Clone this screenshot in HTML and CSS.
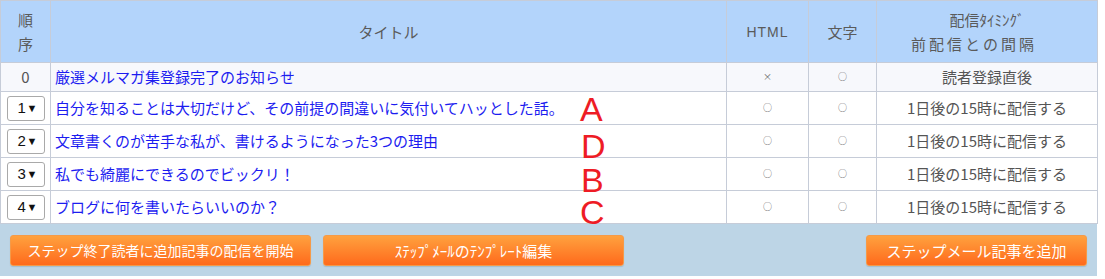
FILE: index.html
```html
<!DOCTYPE html>
<html lang="ja">
<head>
<meta charset="utf-8">
<link rel="stylesheet" href="styles.css">
</head>
<body>
<div class="wrap">
  <table class="steps">
    <colgroup>
      <col class="c-order"><col class="c-title"><col class="c-html"><col class="c-text"><col class="c-timing">
    </colgroup>
    <thead>
      <tr>
        <th>順<br>序</th>
        <th>タイトル</th>
        <th class="latin">HTML</th>
        <th>文字</th>
        <th><span class="l1">配信ﾀｲﾐﾝｸﾞ</span><br><span class="l2">前配信との間隔</span></th>
      </tr>
    </thead>
    <tbody>
      <tr class="first">
        <td class="num">0</td>
        <td class="title"><a href="#">厳選メルマガ集登録完了のお知らせ</a></td>
        <td class="mark">×</td>
        <td class="mark">○</td>
        <td class="timing">読者登録直後</td>
      </tr>
      <tr>
        <td class="num"><span class="sel">1<i>▼</i></span></td>
        <td class="title"><a href="#">自分を知ることは大切だけど、その前提の間違いに気付いてハッとした話。</a></td>
        <td class="mark">○</td>
        <td class="mark">○</td>
        <td class="timing">1日後の15時に配信する</td>
      </tr>
      <tr>
        <td class="num"><span class="sel">2<i>▼</i></span></td>
        <td class="title"><a href="#">文章書くのが苦手な私が、書けるようになった3つの理由</a></td>
        <td class="mark">○</td>
        <td class="mark">○</td>
        <td class="timing">1日後の15時に配信する</td>
      </tr>
      <tr>
        <td class="num"><span class="sel">3<i>▼</i></span></td>
        <td class="title"><a href="#">私でも綺麗にできるのでビックリ！</a></td>
        <td class="mark">○</td>
        <td class="mark">○</td>
        <td class="timing">1日後の15時に配信する</td>
      </tr>
      <tr>
        <td class="num"><span class="sel">4<i>▼</i></span></td>
        <td class="title"><a href="#">ブログに何を書いたらいいのか？</a></td>
        <td class="mark">○</td>
        <td class="mark">○</td>
        <td class="timing">1日後の15時に配信する</td>
      </tr>
    </tbody>
  </table>
  <div class="footer">
    <a class="btn b1" href="#">ステップ終了読者に追加記事の配信を開始</a>
    <a class="btn b2" href="#">ｽﾃｯﾌﾟﾒｰﾙのﾃﾝﾌﾟﾚｰﾄ編集</a>
    <a class="btn b3" href="#">ステップメール記事を追加</a>
  </div>
  <span class="note n-a">A</span>
  <span class="note n-d">D</span>
  <span class="note n-b">B</span>
  <span class="note n-c">C</span>
</div>
</body>
</html>
```
FILE: styles.css
```css
html, body {
  margin: 0;
  padding: 0;
  background: #ffffff;
}
body {
  font-family: "Noto Sans CJK JP", "Liberation Sans", sans-serif;
  font-size: 15px;
  color: #555555;
}
.wrap {
  position: relative;
  width: 1097px;
}
.steps {
  width: 1097px;
  border-collapse: collapse;
  table-layout: fixed;
}
.c-order { width: 50px; }
.c-title { width: 676px; }
.c-html { width: 82px; }
.c-text { width: 68px; }
.c-timing { width: 221px; }
.steps th, .steps td {
  border: 1px solid #c6ccd8;
  padding: 0;
  text-align: center;
  vertical-align: middle;
  line-height: 20px;
}
.steps thead th {
  background: #b3d4fb;
  height: 61px;
  font-weight: normal;
  color: #5a5a5a;
  line-height: 24px;
}
.steps th.latin {
  font-family: "Liberation Sans", sans-serif;
  font-size: 14px;
  letter-spacing: 1px;
}
.steps th .l1 { font-size: 15px; }
.steps th .l2 {
  letter-spacing: 3px;
  padding-right: 26px;
}
.steps tbody tr { height: 33px; }
.steps tbody tr.first { height: 29px; background: #f7f8fc; }
.steps td.title {
  text-align: left;
  padding-left: 4px;
}
.steps td.title a {
  color: #1c1cf0;
  text-decoration: none;
  white-space: nowrap;
}
.steps td.mark {
  font-size: 9px;
  color: #666666;
}
.steps td.timing { color: #555555; }
.steps td.num { color: #555555; }
.sel {
  display: inline-flex;
  align-items: center;
  justify-content: space-between;
  box-sizing: border-box;
  width: 38px;
  height: 25px;
  padding: 0 6px 0 10px;
  border: 1px solid #a9a9a9;
  border-radius: 3px;
  background: #ffffff;
  color: #111111;
  font-family: "Liberation Sans", sans-serif;
  font-size: 15px;
  vertical-align: middle;
}
.sel i {
  font-style: normal;
  font-size: 11px;
}
.footer {
  display: flex;
  align-items: center;
  height: 52px;
  padding: 0 10px;
  background: #bdd5e6;
  gap: 12px;
}
.btn {
  display: flex;
  align-items: center;
  justify-content: center;
  box-sizing: border-box;
  height: 31px;
  border: 1px solid #f59a48;
  border-radius: 3px;
  background: linear-gradient(#ffa13e, #ff6a1c);
  box-shadow: 0 1px 1px rgba(0,0,0,0.12);
  color: #ffffff;
  text-decoration: none;
  white-space: nowrap;
}
.b1 { width: 301px; font-size: 14px; }
.b2 { width: 301px; font-size: 15px; }
.b3 { width: 221px; margin-left: auto; font-size: 15px; }
.note {
  position: absolute;
  font-family: "Liberation Sans", sans-serif;
  font-size: 34px;
  line-height: 26px;
  color: #ee1c25;
}
.n-a { left: 580px; top: 96px; }
.n-d { left: 581px; top: 133px; }
.n-b { left: 581px; top: 167px; }
.n-c { left: 580px; top: 199px; }
```
